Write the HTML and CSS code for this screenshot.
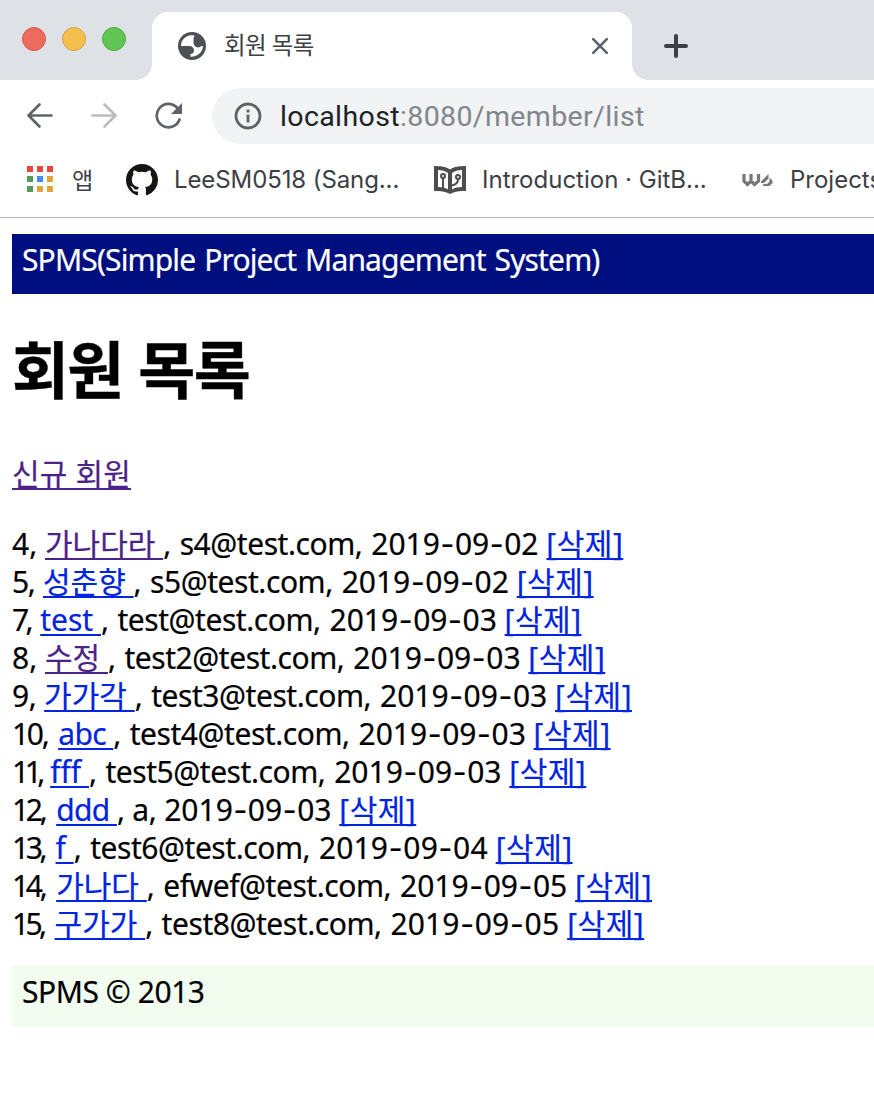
FILE: index.html
```html
<!DOCTYPE html>
<html lang="ko">
<head>
<meta charset="utf-8">
<title>회원 목록</title>
<link rel="stylesheet" href="styles.css">
</head>
<body>
<div class="tabstrip">
  <div class="lights"><i class="light red"></i><i class="light yellow"></i><i class="light green"></i></div>
  <div class="tab">
    <svg class="globe" viewBox="0 0 28 28"><circle cx="14" cy="14" r="14" fill="#4d5156"/><path d="M3 14C3 8 7.500 3.300 13.500 3.200L16.500 3.500C16 5.500 15.500 5.700 15.500 7.500V10.500C15.500 13 17.500 15.400 20 15.400C22 15.400 22.500 14 25 14C24.500 20 20 25 12.500 24.700V22C14.500 21.800 16 20.500 16 18.500C16 15.700 14 14 11.500 14Z" fill="#fff"/></svg>
    <span class="tab-title">회원 목록</span>
    <svg class="close" viewBox="0 0 16 16"><path d="M1.200 1.200l13.600 13.600M14.800 1.200L1.200 14.800"/></svg>
  </div>
  <svg class="plus" viewBox="0 0 24 24"><path d="M12 2v20M2 12h20"/></svg>
</div>
<div class="toolbar">
  <svg class="nav" viewBox="0 0 28 28"><path d="M25.500 13.500H2.500M13.500 2.500l-11 11 11 11"/></svg>
  <svg class="nav off" viewBox="0 0 28 28"><path d="M1.500 13.500h23M13.500 2.500l11 11-11 11"/></svg>
  <svg class="reload" viewBox="0 0 28 28"><path d="M24.500 17.500A11.700 11.700 0 1 1 22.300 6" /><path class="tip" d="M27 1v11H16z"/></svg>
  <div class="omnibox">
    <svg class="info" viewBox="0 0 28 28"><circle cx="14" cy="14" r="12"/><path d="M14 12.500v8M14 7.500v3"/></svg>
    <span class="url">localhost<span class="path">:8080/member/list</span></span>
  </div>
</div>
<div class="bookmarks">
  <div class="apps"><i class="r"></i><i class="r"></i><i class="r"></i><i class="g"></i><i class="b"></i><i class="y"></i><i class="g"></i><i class="y"></i><i class="y"></i></div>
  <span class="bm bm-apps">앱</span>
  <svg class="github" viewBox="0 0 16 16"><path d="M8 0C3.580 0 0 3.580 0 8c0 3.540 2.290 6.530 5.470 7.590.4.070.55-.17.55-.38 0-.19-.01-.82-.01-1.490-2.010.37-2.530-.49-2.690-.94-.09-.23-.48-.94-.82-1.130-.28-.15-.68-.52-.01-.53.63-.01 1.080.58 1.230.82.72 1.210 1.870.87 2.330.66.070-.52.28-.87.51-1.070-1.780-.2-3.640-.89-3.640-3.950 0-.87.31-1.590.82-2.150-.08-.2-.36-1.020.08-2.120 0 0 .67-.21 2.200.82.64-.18 1.320-.27 2-.27s1.360.09 2 .27c1.530-1.040 2.200-.82 2.200-.82.44 1.100.16 1.920.08 2.120.51.56.82 1.270.82 2.150 0 3.070-1.870 3.750-3.650 3.950.29.25.54.73.54 1.480 0 1.070-.01 1.930-.01 2.200 0 .21.15.46.55.38A8.010 8.010 0 0 0 16 8c0-4.420-3.580-8-8-8z"/></svg>
  <span class="bm bm-github">LeeSM0518 (Sang...</span>
  <svg class="book" viewBox="0 0 32 28"><path class="cover" d="M0 0c6 0 12 .5 16 3.500C20 .5 26 0 32 0v25c-6 0-12 .5-16 3-4-2.500-10-3-16-3z"/><path class="page" d="M4 4c4 0 7.500 1 10 3V23.500c-3-1.800-6-2.500-10-2.500zM28 4c-4 0-7.500 1-10 3V23.500c3-1.800 6-2.500 10-2.500z"/><path class="line" d="M9 22V12M18 19.500c4-1 6-3 6-6"/><circle class="line" cx="9" cy="10" r="2"/><circle class="line" cx="24" cy="11" r="2"/></svg>
  <span class="bm bm-gitbook">Introduction · GitB...</span>
  <svg class="ws" viewBox="0 0 31 14"><path d="M2 1v7l3.500 3.500L9 8V1M9 8l3.500 3.500L16.500 8V1"/><path class="leaf" d="M19 8.500L26.500 1v4.500L22 10h-3zM27.500 4.500L30.500 7.500V10L27.500 13H20.500l1-2H25l2.500-2.500z"/></svg>
  <span class="bm bm-projects">Projects</span>
</div>
<main class="page-body">
  <div class="header"><span>SPMS(Simple Project Management System)</span></div>
  <h1>회원 목록</h1>
  <p class="new"><a class="visited">신규 회원</a></p>
  <div class="list">
    <div class="row"><span class="id n4">4, </span><a class="visited">가나다라 </a><span class="mail">, s4@test.com, </span><span class="date">2019<b>-</b>09<b>-</b>02 </span><a class="del">[삭제]</a></div>
    <div class="row"><span class="id n5">5, </span><a>성춘향 </a><span class="mail">, s5@test.com, </span><span class="date">2019<b>-</b>09<b>-</b>02 </span><a class="del">[삭제]</a></div>
    <div class="row"><span class="id n7">7, </span><a>test </a><span class="mail">, test@test.com, </span><span class="date">2019<b>-</b>09<b>-</b>03 </span><a class="del">[삭제]</a></div>
    <div class="row"><span class="id n8">8, </span><a class="visited">수정 </a><span class="mail">, test2@test.com, </span><span class="date">2019<b>-</b>09<b>-</b>03 </span><a class="del">[삭제]</a></div>
    <div class="row"><span class="id n9">9, </span><a>가가각 </a><span class="mail">, test3@test.com, </span><span class="date">2019<b>-</b>09<b>-</b>03 </span><a class="del">[삭제]</a></div>
    <div class="row"><span class="id n10">10, </span><a class="tight">abc </a><span class="mail">, test4@test.com, </span><span class="date">2019<b>-</b>09<b>-</b>03 </span><a class="del">[삭제]</a></div>
    <div class="row"><span class="id n11">11, </span><a>fff </a><span class="mail">, test5@test.com, </span><span class="date">2019<b>-</b>09<b>-</b>03 </span><a class="del">[삭제]</a></div>
    <div class="row"><span class="id n12">12, </span><a class="tight">ddd </a><span class="mail short">, a, </span><span class="date">2019<b>-</b>09<b>-</b>03 </span><a class="del">[삭제]</a></div>
    <div class="row"><span class="id n13">13, </span><a>f </a><span class="mail">, test6@test.com, </span><span class="date wide">2019<b>-</b>09<b>-</b>04 </span><a class="del">[삭제]</a></div>
    <div class="row"><span class="id n14">14, </span><a>가나다 </a><span class="mail">, efwef@test.com, </span><span class="date">2019<b>-</b>09<b>-</b>05 </span><a class="del">[삭제]</a></div>
    <div class="row"><span class="id n15">15, </span><a>구가가 </a><span class="mail">, test8@test.com, </span><span class="date wide">2019<b>-</b>09<b>-</b>05 </span><a class="del">[삭제]</a></div>
  </div>
  <div class="footer"><span>SPMS © 2013</span></div>
</main>
</body>
</html>
```
FILE: styles.css
```css
* { box-sizing: border-box; }
body { margin: 0; width: 874px; height: 1112px; overflow: hidden; background: #fff; white-space: nowrap; }
svg { display: block; flex: none; fill: none; }

.tabstrip { display: flex; height: 80px; background: #dee1e6; }
.lights { display: flex; gap: 16px; width: 152px; padding: 27px 0 0 22px; background: #dee1e6; }
.light { width: 24px; height: 24px; border-radius: 50%; border: 1px solid; }
.red { background: #ed6a5e; border-color: #d65a4f; }
.yellow { background: #f5bf4f; border-color: #d9a13c; }
.green { background: #61c554; border-color: #4fab42; }
.tab { position: relative; display: flex; align-items: center; width: 480px; height: 68px; margin-top: 12px; padding: 0 24px 0 26px; background: #fff; border-radius: 16px 16px 0 0; }
.tab::before, .tab::after { content: ""; position: absolute; bottom: 0; width: 16px; height: 16px; }
.tab::before { left: -16px; background: radial-gradient(circle at 0 0, transparent 15.500px, #fff 16px); }
.tab::after { right: -16px; background: radial-gradient(circle at 100% 0, transparent 15.500px, #fff 16px); }
.globe { width: 28px; height: 28px; }
.tab-title { flex: 1; margin-left: 18px; padding-bottom: 4px; font: 23.500px/34px "Noto Sans CJK KR", sans-serif; color: #3c4043; letter-spacing: -0.700px; }
.close { width: 16px; height: 16px; stroke: #5f6368; stroke-width: 2.600; stroke-linecap: round; }
.plus { width: 24px; height: 24px; margin: 34px 0 0 32px; stroke: #3c4043; stroke-width: 4; stroke-linecap: round; }

.toolbar { display: flex; align-items: center; height: 72px; padding-left: 26px; }
.nav, .reload { width: 28px; height: 28px; stroke: #5f6368; stroke-width: 2.700; stroke-linecap: round; stroke-linejoin: round; }
.nav { margin-right: 37px; }
.nav.off { stroke: #babcbe; margin-right: 36px; }
.reload .tip { fill: #5f6368; stroke: none; }
.omnibox { display: flex; align-items: center; flex: 1; height: 56px; margin-left: 29px; padding-left: 22px; background: #f1f3f4; border-radius: 28px 0 0 28px; }
.info { width: 28px; height: 28px; stroke: #5f6368; stroke-width: 2.800; }
.url { margin-left: 18px; padding-top: 2px; font: 28.500px/40px Roboto, sans-serif; color: #202124; letter-spacing: 0.380px; }
.path { color: #80868b; }

.bookmarks { display: flex; align-items: center; height: 66px; padding: 0 0 9px 27px; border-bottom: 1px solid #b4b6b8; }
.apps { display: grid; flex: none; grid-template-columns: repeat(3, 6px); gap: 4px; padding-bottom: 2px; }
.apps i { height: 6px; }
.r { background: #e04a3f; } .g { background: #55995e; } .b { background: #4a8af4; } .y { background: #e2a53a; }
.bm { flex: none; font: 24px/32px Inter, "Noto Sans CJK KR", sans-serif; color: #3c4043; }
.bm-apps { width: 73px; padding: 0 0 3px 19px; font-size: 23px; font-family: "Noto Sans CJK KR", sans-serif; }
.github { width: 32px; height: 32px; margin-right: 16px; fill: #161514; }
.bm-github { width: 260px; letter-spacing: -0.100px; }
.book { width: 32px; height: 28px; margin-right: 16px; }
.cover { fill: #4d4d4d; } .page { fill: #fff; } .line { stroke: #4d4d4d; stroke-width: 2; }
.bm-gitbook { width: 260px; }
.ws { width: 31px; height: 14px; margin-right: 17px; stroke: #777; stroke-width: 3.200; }
.ws .leaf { fill: #777; stroke: none; }

.page-body { padding: 16px 0 0 12px; font: 30px/38px "Noto Sans", "Noto Sans CJK KR", sans-serif; color: #000; -webkit-text-stroke: 0.200px; }
.header { height: 60px; padding: 7px 10px; background: #000f80; color: #fff; letter-spacing: -0.850px; word-spacing: 1.900px; }
h1 { margin: 29px 0 0; font: bold 62px/88px "Noto Sans CJK KR", sans-serif; letter-spacing: -1.700px; -webkit-text-stroke: 0.400px; }
.new { margin: 44px 0 0; letter-spacing: 0.150px; }
a { color: #0024e0; text-decoration: underline; text-decoration-thickness: 2px; text-underline-offset: 3px; text-decoration-skip-ink: none; }
.visited { color: #4b2288; }
.list { margin-top: 32px; }
.row { height: 38px; }
.mail { letter-spacing: -0.450px; word-spacing: 1.500px; }
.mail.short { word-spacing: 0.500px; }
.date b { font-family: Inter, sans-serif; font-weight: 400; padding: 0 0.600px; }
.date.wide { letter-spacing: 0.150px; }
.del { letter-spacing: 0.500px; }
.tight { letter-spacing: -0.600px; }
.n5 { letter-spacing: -1.500px; word-spacing: 2.500px; }
.n7 { letter-spacing: -3.600px; word-spacing: 6px; }
.n9 { letter-spacing: -0.300px; }
.n10 { letter-spacing: -2.300px; word-spacing: 5.200px; }
.n11 { letter-spacing: -4.500px; word-spacing: 6px; }
.n12 { letter-spacing: -3.300px; word-spacing: 7.200px; }
.n13 { letter-spacing: -3.450px; word-spacing: 7.200px; }
.n14 { letter-spacing: -3.300px; word-spacing: 7.200px; }
.n15 { letter-spacing: -3.700px; word-spacing: 7.200px; }
.footer { height: 60px; margin-top: 23px; padding: 7px 10px; background: #f2fdf0; letter-spacing: -0.450px; }
```
